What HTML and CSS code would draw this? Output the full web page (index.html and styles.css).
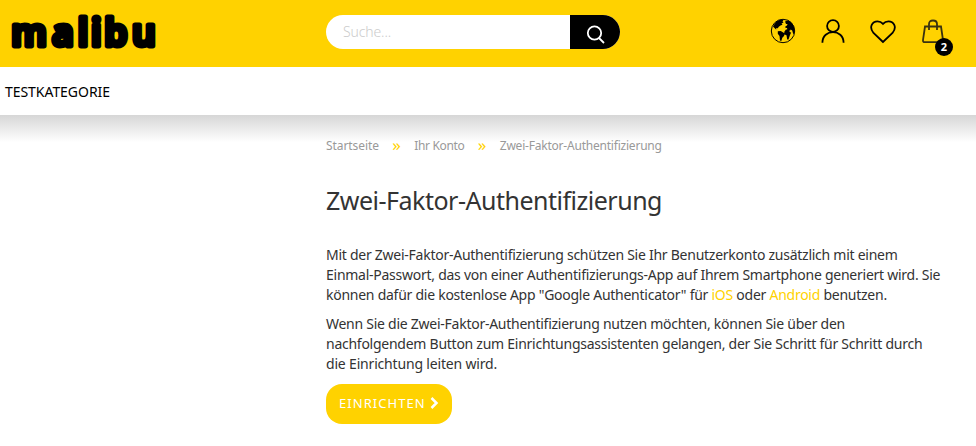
FILE: index.html
```html
<!DOCTYPE html>
<html lang="de">
<head>
<meta charset="utf-8">
<title>Zwei-Faktor-Authentifizierung</title>
<link rel="stylesheet" href="styles.css">
</head>
<body>
<header class="topbar">
  <a class="brand"><svg width="170" height="67" viewBox="0 0 170 67"><text class="brand-text" x="11.200 52 77.700 91 104.200 132" y="46.200">malibu</text></svg></a>
  <form class="search">
    <span class="search-field">Suche...</span>
    <span class="search-button"><svg width="20" height="20" viewBox="0 0 20 20"><circle cx="8.500" cy="8" r="6.700"/><path d="M13 13l5 5"/></svg></span>
  </form>
  <nav class="actions">
    <svg class="icon" width="26" height="26" viewBox="0 0 26 26"><circle class="rim" cx="13" cy="13" r="11.700"/><path class="solid" d="M3 8.500C5 4.500 8 2 11 1.600l2.500.7-1 1.300 1 .8-2 1.200 1 1.200-2 .8-1.700 1.200-1 1.500-1.800 0 .3 1.500L4.500 10zM7.800 13.200l3-.2 4 2.500-.8 2.500-1.700 1.800-1 3.200-1.300-.5-.5-4.500-1.700-2.300zM15 3.500l3.500-1.200c3 1.700 5.500 5 6 8.700l-.3 4.500-1 .5-1-3.500-1.500-1-.7 1.200-1-.2 1 1.700 1.200.3-1.200 2.500-1.500 4.500-1.300 0-.7-4.200-1.800-.8-.5-2.500 1.500-2.200 1.600-.6-.3-1.200-1.700-.2.200-1.500 1.500-.8.500-1.500-1.500 0z"/></svg>
    <svg class="icon" width="26" height="26" viewBox="0 0 26 26"><circle cx="13" cy="8" r="5.900"/><path d="M2.400 24.800C2.400 10.500 23.600 10.500 23.600 24.800"/></svg>
    <svg class="icon" width="26" height="26" viewBox="0 0 26 26"><path d="M13 24L3.500 15C-1.500 9 2.500 3.300 7.500 3.300c2 0 4 .8 5.500 2.500 1.500-1.700 3.500-2.500 5.500-2.500C23.500 3.300 27.500 9 22.500 15z"/></svg>
    <span class="cart"><svg class="icon bag" width="26" height="26" viewBox="0 0 26 26"><path d="M5 8.500h16l2 13.500q.3 2.200-1.800 2.200H4.800q-2.100 0-1.800-2.200zM9 12V6q0-3.500 4-3.500T17 6v6"/></svg><b class="badge">2</b></span>
  </nav>
</header>
<nav class="menu">TESTKATEGORIE</nav>
<main class="page">
  <div class="content">
    <div class="crumbs"><span class="c1">Startseite</span><i>»</i><span class="c2">Ihr Konto</span><i>»</i><span class="c3">Zwei-Faktor-Authentifizierung</span></div>
    <h1>Zwei-Faktor-Authentifizierung</h1>
    <p>Mit der Zwei-Faktor-Authentifizierung schützen Sie Ihr Benutzerkonto zusätzlich mit einem<br>
    Einmal-Passwort, das von einer Authentifizierungs-App auf Ihrem Smartphone generiert wird. Sie<br>
    können dafür die kostenlose App "Google Authenticator" für <a>iOS</a> oder <a>Android</a> benutzen.</p>
    <p>Wenn Sie die Zwei-Faktor-Authentifizierung nutzen möchten, können Sie über den<br>
    nachfolgendem Button zum Einrichtungsassistenten gelangen, der Sie Schritt für Schritt durch<br>
    <span class="short-line">die Einrichtung leiten wird.</span></p>
    <a class="button"><span>EINRICHTEN</span><svg width="9" height="14" viewBox="0 0 9 14"><path d="M1.500 2l5 5-5 5"/></svg></a>
  </div>
</main>
</body>
</html>
```
FILE: styles.css
```css
* { box-sizing: border-box; }
body { margin: 0; background: #fff; color: #333; font: 14px/20px "Noto Sans", sans-serif; }
.topbar { height: 67px; background: #ffd200; display: grid; grid-template-columns: 326px 294px 1fr; }
.brand svg { display: block; }
.brand-text { font: 600 37px "Noto Sans", sans-serif; stroke: #000; stroke-width: 5px; stroke-linejoin: round; }
.search { display: flex; height: 34px; margin: 15px 0 0; border-radius: 17px; overflow: hidden; background: #fff; }
.search-field { flex: 1; padding: 7px 17px; color: #ccc; font-weight: 300; letter-spacing: -0.12px; }
.search-button { width: 50px; background: #000; padding: 10px 0 0 16px; }
.search-button svg { display: block; fill: none; stroke: #fff; stroke-width: 1.800; }
.actions { display: flex; justify-content: flex-end; gap: 24px; padding: 18px 30px 0 0; }
.icon { display: block; fill: none; stroke: #000; stroke-width: 1.800; }
.icon .solid { fill: #000; stroke: none; }
.icon .rim { stroke-width: 1; }
.cart { position: relative; height: 26px; }
.icon.bag { stroke: #3a3210; }
.badge { position: absolute; left: 15px; top: 20px; width: 18px; height: 18px; border-radius: 9px; background: #000; color: #fff; font-size: 11px; line-height: 18px; text-align: center; }
.menu { height: 48px; padding: 15px 5px; color: #000; letter-spacing: -0.047px; }
.page { min-height: 331px; background: linear-gradient(#d6d6d6, #fff 27px) no-repeat; padding: 21px 0 0 326px; }
.content { white-space: nowrap; }
.crumbs { font-size: 12px; color: #999; height: 20px; display: flex; }
.crumbs i { font-style: normal; font-size: 17px; line-height: 18px; color: #ffd200; width: 35.400px; text-align: center; }
.c1 { letter-spacing: -0.07px; }
.c2 { letter-spacing: -0.363px; }
.c3 { letter-spacing: -0.212px; }
h1 { margin: 28px 0 28px; font-size: 25px; line-height: 32px; font-weight: 400; letter-spacing: -0.494px; }
p { margin: 0 0 9px; letter-spacing: -0.258px; }
p + p { margin-bottom: 10px; }
p a { color: #ffd200; }
.short-line { letter-spacing: -0.18px; }
h1 + p { margin-top: 29px; }
.button { display: flex; align-items: center; width: 126px; height: 40px; border-radius: 16px; background: #ffd200; color: #fff; padding: 0 0 2px 13px; gap: 4px; font-size: 13px; letter-spacing: 1.050px; }
.button svg { fill: none; stroke: #fff; stroke-width: 2.500; }
```
